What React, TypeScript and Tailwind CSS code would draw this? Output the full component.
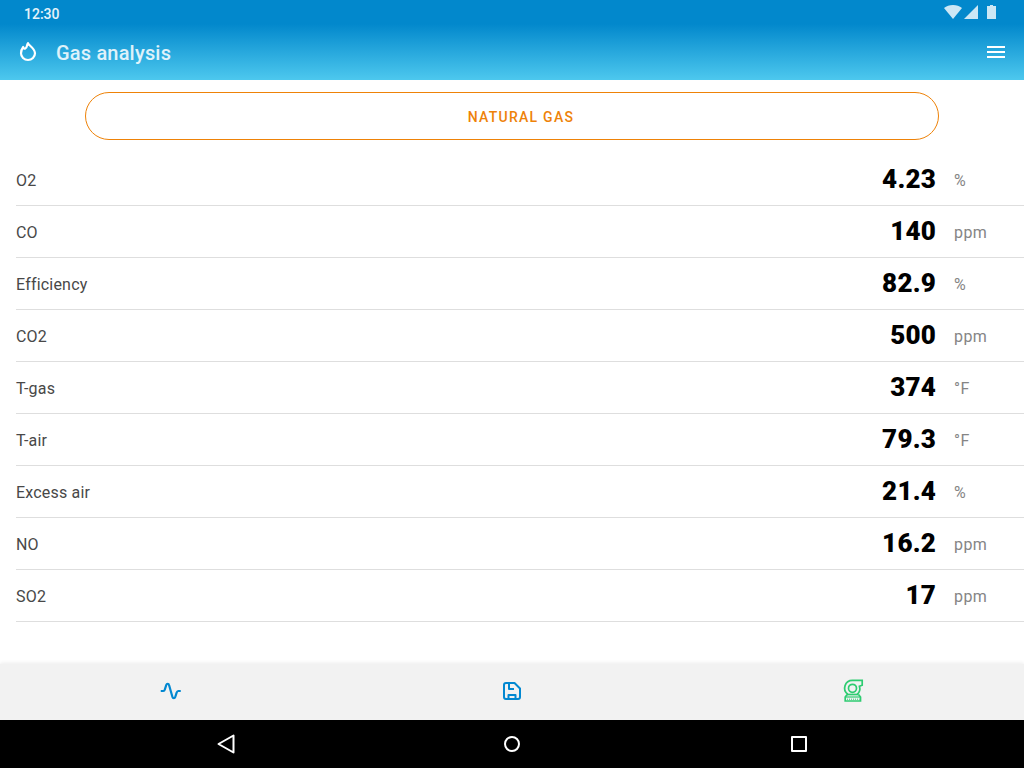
interface Reading {
    label: string;
    value: string;
    unit: string;
}

const readings: Reading[] = [
    { label: "O2", value: "4.23", unit: "%" },
    { label: "CO", value: "140", unit: "ppm" },
    { label: "Efficiency", value: "82.9", unit: "%" },
    { label: "CO2", value: "500", unit: "ppm" },
    { label: "T-gas", value: "374", unit: "°F" },
    { label: "T-air", value: "79.3", unit: "°F" },
    { label: "Excess air", value: "21.4", unit: "%" },
    { label: "NO", value: "16.2", unit: "ppm" },
    { label: "SO2", value: "17", unit: "ppm" },
];

function StatusIcons() {
    return (
        <svg className="w-[54px] h-6 text-white/80" viewBox="0 0 54 24" fill="currentColor">
            {/* Wifi */}
            <path d="M10 19 L1 8 C3.400 6 6.500 5 10 5 C13.500 5 16.600 6 19 8 Z" />
            {/* Signal */}
            <path d="M21 19 L35 5 V19 Z" />
            {/* Battery */}
            <path d="M44 6 H47 V5 H50 V6 H53 V19 H44 Z" />
        </svg>
    );
}

function FlameIcon() {
    return (
        <svg className="w-6 h-6 text-white" viewBox="0 0 24 24" fill="none" stroke="currentColor" strokeWidth="2.2" strokeLinejoin="round">
            <path d="M12 3.200 C12.500 5.500 19 8 19 13.300 C19 17.100 15.900 20 12 20 C8.100 20 5 17.100 5 13.300 C5 10.500 6.200 8.300 7.200 7 C7.500 8.200 8.300 9 9.300 8.600 C11.200 7.800 10.500 5.200 12 3.200 Z" />
        </svg>
    );
}

function PulseIcon() {
    return (
        <svg className="w-6 h-6 text-[#0288d1]" viewBox="0.250 0 24 24" fill="none" stroke="currentColor" strokeWidth="2.2" strokeLinejoin="round">
            <path d="M2 12 H4.500 C5.600 12 5.900 11.300 6.200 10.200 L7.500 6 C8 4.300 9.900 4.300 10.300 6 L13.700 18 C14.100 19.500 16 19.500 16.500 18 L17.800 13.800 C18.200 12.600 18.500 12 19.500 12 H22" />
        </svg>
    );
}

function SaveIcon() {
    return (
        <svg className="w-6 h-6 text-[#0288d1]" viewBox="0 0 24 24" fill="none" stroke="currentColor" strokeWidth="2" strokeLinejoin="round">
            <path d="M6 4 H14.500 L20 9.500 V18 A2 2 0 0 1 18 20 H6 A2 2 0 0 1 4 18 V6 A2 2 0 0 1 6 4 Z" />
            <path d="M9 4 V10 H14" />
            <path d="M8.500 20 V16 H15.500 V20" />
        </svg>
    );
}

function BlowerIcon() {
    return (
        <svg className="w-6 h-6 text-[#2ecc71]" viewBox="0 0 24 24" fill="none" stroke="currentColor" strokeWidth="1.7">
            <circle cx="11.500" cy="9.300" r="4" />
            <path d="M6.800 15.300 A7.700 7.700 0 0 1 11.500 1.400 H21.200 V6.200 L18.400 7.200 A7.700 7.700 0 0 1 16.200 15.300" />
            <path d="M6 15.500 H17.500" />
            <path d="M6.200 15.500 L4.200 18 V22 H19.500 V18 L17.500 15.500" />
            <path d="M5 18 H19" strokeWidth="1.200" />
            <path d="M6 20.200 H18.500" strokeWidth="1" strokeDasharray="1 1" />
        </svg>
    );
}

function ReadingRow({ label, value, unit }: Reading) {
    return (
        <div className="flex h-[52px] border-b border-[#dedede] leading-6">
            <span className="flex-1 pt-[15px] text-base tracking-[0.2px] text-[#484848]">{label}</span>
            <span className="pt-[13px] text-[26px] font-black tracking-[0.2px] text-black">{value}</span>
            <span className="w-[88px] pl-[18px] pt-[15px] text-base tracking-[0.4px] text-[#858585]">{unit}</span>
        </div>
    );
}

export default function App() {
    return (
        <div className="flex h-[768px] w-[1024px] flex-col overflow-hidden bg-white font-['Roboto',sans-serif]">
            {/* Status bar + toolbar */}
            <header className="h-20 bg-[linear-gradient(to_bottom,#0288cc_0px,#0288cc_24px,#4dc8ee_80px)]">
                <div className="flex h-6 items-center justify-between pl-6 pr-[27px]">
                    <span className="pt-[4px] text-sm font-medium leading-5 text-white/90">12:30</span>
                    <StatusIcons />
                </div>
                <div className="flex h-14 items-center pl-4 pr-[19px]">
                    <FlameIcon />
                    <h1 className="flex-1 pl-4 pt-[2px] text-xl font-medium tracking-[0.18px] text-white/85">Gas analysis</h1>
                    <svg className="h-3 w-[18px] text-white" viewBox="0 0 18 12" fill="currentColor">
                        <path d="M0 0 H18 V2 H0 Z M0 5 H18 V7 H0 Z M0 10 H18 V12 H0 Z" />
                    </svg>
                </div>
            </header>

            <main className="flex-1">
                <div className="px-[85.4px] pt-3 pb-[14px]">
                    <button className="block h-12 w-full rounded-full border border-[#ee8208] pl-[18px] pt-[2px] text-sm font-medium tracking-[1.25px] text-[#ee8208]">
                        NATURAL GAS
                    </button>
                </div>
                <div className="pl-4">
                    {readings.map((reading) => (
                        <ReadingRow key={reading.label} {...reading} />
                    ))}
                </div>
            </main>

            {/* Tabs */}
            <nav className="grid h-14 grid-cols-3 items-center justify-items-center bg-[#f2f2f2] pb-[2px] shadow-[0_-1px_4px_rgba(0,0,0,0.08)]">
                <PulseIcon />
                <SaveIcon />
                <BlowerIcon />
            </nav>

            {/* System navigation */}
            <footer className="flex h-12 items-center justify-between bg-black pl-[214px] pr-[214px] text-white">
                <svg className="h-6 w-6" viewBox="0 0 24 24" fill="none" stroke="currentColor" strokeWidth="2" strokeLinejoin="round">
                    <path d="M19.500 3.500 V20.500 L4.500 12 Z" />
                </svg>
                <svg className="h-6 w-6" viewBox="0 0 24 24" fill="none" stroke="currentColor" strokeWidth="2">
                    <circle cx="12" cy="12" r="7" />
                </svg>
                <svg className="h-6 w-6" viewBox="0 0 24 24" fill="none" stroke="currentColor" strokeWidth="2" strokeLinejoin="round">
                    <path d="M6 5 H20 V19 H6 Z" />
                </svg>
            </footer>
        </div>
    );
}
